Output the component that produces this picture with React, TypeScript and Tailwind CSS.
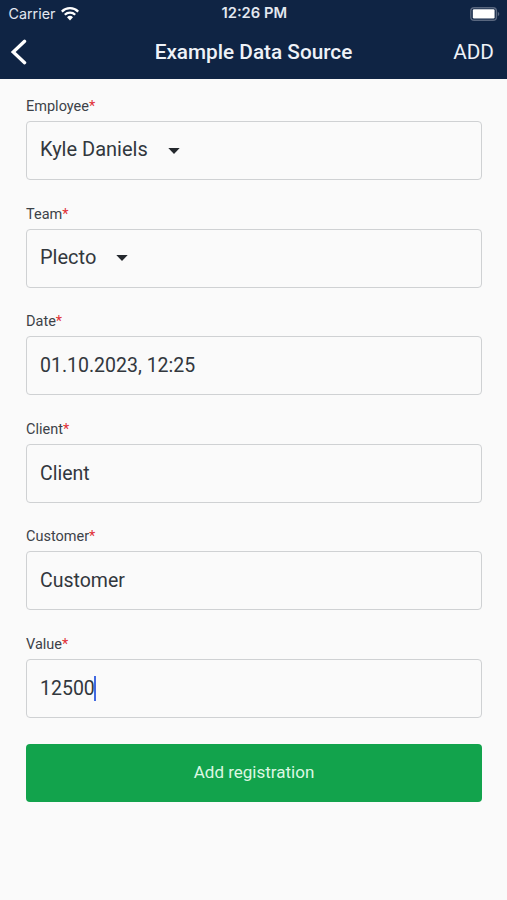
import { useState } from 'react';

type Field = {
    label: string;
    value: string;
    kind: 'select' | 'text';
    focused?: boolean;
};

const fields: Field[] = [
    { label: 'Employee', value: 'Kyle Daniels', kind: 'select' },
    { label: 'Team', value: 'Plecto', kind: 'select' },
    { label: 'Date', value: '01.10.2023, 12:25', kind: 'text' },
    { label: 'Client', value: 'Client', kind: 'text' },
    { label: 'Customer', value: 'Customer', kind: 'text' },
    { label: 'Value', value: '12500', kind: 'text', focused: true },
];

const WifiIcon = () => (
    <svg className="h-[14px] w-[18px]" viewBox="0 0 18 14" fill="none">
        <path
            d="M.8 4.6a11.6 11.6 0 0 1 16.4 0M3.8 7.7a7.4 7.4 0 0 1 10.4 0"
            stroke="white"
            strokeWidth="2.3"
        />
        <path d="M9 13.4 6 10.3a4.3 4.3 0 0 1 6 0z" fill="white" />
    </svg>
);

const BatteryIcon = () => (
    <svg className="h-[14px] w-[30px]" viewBox="0 0 30 14" fill="none">
        <rect
            x="0.8"
            y="0.7"
            width="25.6"
            height="12.6"
            rx="3.4"
            stroke="#59677f"
            strokeWidth="1.4"
        />
        <rect x="2.8" y="2.3" width="21.8" height="9.2" rx="1.2" fill="white" />
        <path d="M27.8 4.8c2 .8 2 3.6 0 4.4z" fill="#59677f" />
    </svg>
);

const StatusBar = () => (
    <div className="grid h-[27px] grid-cols-[1fr_auto_1fr] items-center pr-[7px] pl-[8.5px] font-['Inter',sans-serif] text-[#e3e8f0]">
        <div className="flex items-center gap-[6px]">
            <span className="text-[14.3px]">Carrier</span>
            <WifiIcon />
        </div>
        <span className="text-center text-[14.75px] font-semibold whitespace-nowrap">
            12:26 PM
        </span>
        <div className="flex justify-end">
            <BatteryIcon />
        </div>
    </div>
);

const NavBar = () => (
    <nav className="grid h-[52px] grid-cols-[1fr_auto_1fr] items-center pr-[13px] pl-[13px] text-[20.75px] text-[#eef2f8]">
        <button type="button" aria-label="Back" className="-ml-[3px] pb-[2px]">
            <svg className="h-[26px] w-[18px]" viewBox="0 0 18 26" fill="none">
                <path
                    d="M14.6 2.3 3.2 13l11.4 10.7"
                    stroke="white"
                    strokeWidth="3.3"
                    strokeLinecap="round"
                />
            </svg>
        </button>
        <h1 className="font-medium">Example Data Source</h1>
        <button type="button" className="text-right">
            ADD
        </button>
    </nav>
);

const FormField = ({ field }: { field: Field }) => (
    <div>
        <div className="text-[14.5px] leading-5 text-[#3d4248]">
            {field.label}
            <span className="text-[#e02f35]">*</span>
        </div>
        <div className="mt-1 flex h-[59px] items-center rounded-[4px] border border-[#cfd1d3] px-[13px] text-[#32373d]">
            {field.kind === 'select' ? (
                <>
                    <span className="pb-[3px] text-[20px]">{field.value}</span>
                    <svg className="ml-5 h-[6px] w-3" viewBox="0 0 12 6">
                        <path d="M.3 0h11.4L6 6z" fill="#24282d" />
                    </svg>
                </>
            ) : (
                <span className="text-[19.5px]">{field.value}</span>
            )}
            {field.focused && (
                <span className="-ml-px h-[25px] w-[2px] bg-[#4169e1]" />
            )}
        </div>
    </div>
);

export default function App() {
    const [items] = useState(fields);

    return (
        <div className="min-h-screen bg-[#fafafa] font-['Roboto',sans-serif]">
            <header className="h-[79px] bg-[#0f2444]">
                <StatusBar />
                <NavBar />
            </header>
            <main className="pt-[18.3px] pr-[25px] pl-[26px]">
                <form className="flex flex-col gap-[24.5px]">
                    {items.map((field) => (
                        <FormField key={field.label} field={field} />
                    ))}
                    <button
                        type="button"
                        className="mt-[1.5px] h-[58px] rounded-[4px] bg-[#12a34c] text-[17px] text-[#dcf7e2]"
                    >
                        Add registration
                    </button>
                </form>
            </main>
        </div>
    );
}
